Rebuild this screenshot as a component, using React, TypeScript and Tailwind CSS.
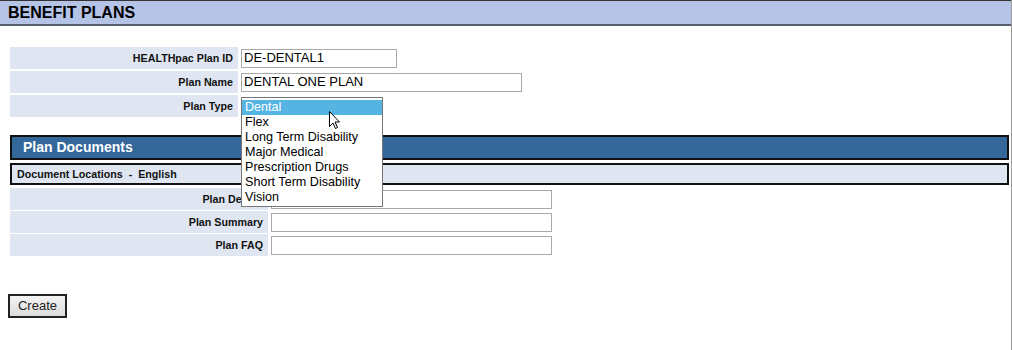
const planTypes = [
  "Dental",
  "Flex",
  "Long Term Disability",
  "Major Medical",
  "Prescription Drugs",
  "Short Term Disability",
  "Vision",
];

const LabelRow = ({
  label,
  labelWidth,
  inputWidth,
  value,
}: {
  label: string;
  labelWidth: string;
  inputWidth?: string;
  value?: string;
}) => (
  <div className="flex h-[22px] items-center">
    <div
      className={`${labelWidth} flex h-full items-center justify-end bg-[#dfe6f2] pr-[5px] text-[10.7px] font-bold text-[#111]`}
    >
      {label}
    </div>
    {inputWidth && (
      <div
        className={`${inputWidth} ml-[3px] flex h-[19px] items-center border border-[#a9a9a9] bg-white px-[2px] text-[13px] text-black`}
      >
        {value}
      </div>
    )}
  </div>
);

export default function App() {
  return (
    <div
      className="relative h-[350px] w-[1012px] overflow-hidden border-r border-[#9a9a9a] bg-white"
      style={{ fontFamily: '"Liberation Sans", Arial, sans-serif' }}
    >
      <div className="flex h-[26px] items-center border-t border-b-2 border-t-[#333] border-b-[#5a5f70] bg-[#b4c3e6] pl-[8px] text-[16px] font-bold text-black">
        BENEFIT PLANS
      </div>

      <div className="ml-[10px] mt-[21px] flex flex-col gap-[2px]">
        <LabelRow label="HEALTHpac Plan ID" labelWidth="w-[228px]" inputWidth="w-[156px]" value="DE-DENTAL1" />
        <LabelRow label="Plan Name" labelWidth="w-[228px]" inputWidth="w-[281px]" value="DENTAL ONE PLAN" />
        <div className="relative">
          <LabelRow label="Plan Type" labelWidth="w-[228px]" />
          <div className="absolute left-[231px] top-[2px] z-10 w-[142px] border border-[#767676] bg-white pb-[1px] pt-[2px] text-[12.6px] text-black">
            {planTypes.map((t, i) => (
              <div
                key={t}
                className={`h-[15px] pl-[3px] leading-[15px] ${i === 0 ? "bg-[#56b4e3] text-white" : ""}`}
              >
                {t}
              </div>
            ))}
            <svg
              className="absolute left-[87px] top-[13px]"
              width="12"
              height="19"
              viewBox="0 0 12 19"
            >
              <path
                d="M0.5 0.5 L0.5 15.5 L4 12 L6.5 17.5 L8.5 16.5 L6 11 L10.5 11 Z"
                fill="white"
                stroke="black"
                strokeWidth="1"
                strokeLinejoin="miter"
              />
            </svg>
          </div>
        </div>
      </div>

      <div className="ml-[10px] mt-[18px] flex h-[25px] w-[999px] items-center border-2 border-[#111] bg-[#34679a] pl-[11px] text-[14px] font-bold text-white">
        Plan Documents
      </div>
      <div className="ml-[10px] mt-[3px] flex h-[22px] w-[999px] items-center border-2 border-[#111] bg-[#dfe6f2] pl-[5px] text-[10.7px] font-bold text-[#111]">
        Document Locations&nbsp; - &nbsp;English
      </div>

      <div className="ml-[10px] mt-[3px] flex flex-col gap-[1px]">
        <LabelRow label="Plan Details" labelWidth="w-[258px]" inputWidth="w-[281px]" />
        <LabelRow label="Plan Summary" labelWidth="w-[258px]" inputWidth="w-[281px]" />
        <LabelRow label="Plan FAQ" labelWidth="w-[258px]" inputWidth="w-[281px]" />
      </div>

      <button className="ml-[8px] mt-[38px] h-[24px] w-[59px] border-2 border-[#222] bg-gradient-to-b from-[#f4f4f4] to-[#dcdcdc] text-[13px] text-[#222]">
        Create
      </button>
    </div>
  );
}
